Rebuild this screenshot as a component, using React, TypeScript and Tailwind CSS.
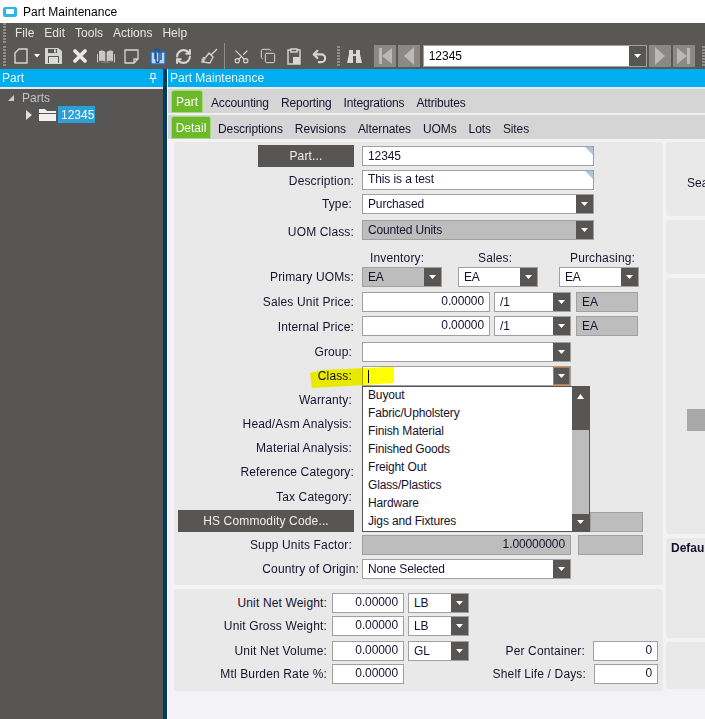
import type { ReactNode } from "react";
import { Copy, RefreshCw, Scissors, Undo2, X } from "lucide-react";

const Arrow = () => (
  <svg width="7" height="5" viewBox="0 0 7 5" className="block">
    <path d="M0 0h7L3.5 4z" fill="#fff" />
  </svg>
);

const Grip = () => (
  <div className="w-[3px] h-[20px] bg-[repeating-linear-gradient(to_bottom,#8e8d8a_0,#8e8d8a_2px,transparent_2px,transparent_3px)]" />
);

function Input({ w, value, right, corner, gray, raise = "" }: { w: string; value?: string; right?: boolean; corner?: boolean; gray?: boolean; raise?: string }) {
  return (
    <div className={`${w} h-[20px] relative border border-[#a0a0a0] flex items-center px-[5px] shrink-0 tracking-[-0.1px] ${gray ? "bg-[#bdbdbd]" : "bg-white"} ${right ? "justify-end" : ""} ${raise}`}>
      <span className="truncate">{value}</span>
      {corner && <div className="absolute top-0 right-0 border-t-[8px] border-l-[8px] border-t-[#b0c4de] border-l-transparent" />}
    </div>
  );
}

function Combo({ w, value, gray, focus }: { w: string; value?: ReactNode; gray?: boolean; focus?: boolean }) {
  return (
    <div className={`${w} h-[20px] border border-[#a0a0a0] flex items-stretch shrink-0 tracking-[-0.15px] ${gray ? "bg-[#bdbdbd]" : "bg-white"}`}>
      <div className="flex-1 min-w-0 px-[5px] flex items-center truncate">{value}</div>
      <div className={`w-[17px] bg-[#575654] flex items-center justify-center ${focus ? "border border-[#c87a2a]" : ""}`}>
        <Arrow />
      </div>
    </div>
  );
}

function Row({ label, mt, pr = "pr-[2px]", children }: { label?: string; mt: string; pr?: string; children?: ReactNode }) {
  return (
    <div className={`flex items-center gap-[8px] relative h-[20px] ${mt}`}>
      <div className="w-[180px] flex justify-end whitespace-nowrap shrink-0">
        <span className={pr}>{label}</span>
      </div>
      {children}
    </div>
  );
}

function BottomRow({ label, mt, children }: { label: string; mt: string; children?: ReactNode }) {
  return (
    <div className={`flex items-center h-[20px] ${mt}`}>
      <div className="w-[153px] text-right whitespace-nowrap shrink-0">{label}</div>
      <div className="w-[5px] shrink-0" />
      {children}
    </div>
  );
}

const classes = ["Buyout", "Fabric/Upholstery", "Finish Material", "Finished Goods", "Freight Out", "Glass/Plastics", "Hardware", "Jigs and Fixtures"];

function NavBtn({ d }: { d: string }) {
  return (
    <div className="w-[22px] h-[22px] bg-[#8a8986] flex items-center justify-center">
      <svg width="22" height="22" viewBox="0 0 22 22"><path d={d} fill="#b9b9b9" /></svg>
    </div>
  );
}

function Toolbar() {
  const ic = "w-[26px] flex justify-center shrink-0";
  return (
    <div className="h-[26px] bg-[#5a5855] flex items-center pl-[3px] text-[#d6d6d6]">
      <Grip />
      <div className="ml-[7px] w-[16px] flex justify-center">
        <svg width="14" height="16" viewBox="0 0 14 16" fill="none" stroke="currentColor" strokeWidth="1.4"><path d="M5 1h8v14H1V5z" /></svg>
      </div>
      <div className="ml-[5px] w-[7px]"><svg width="6" height="4" viewBox="0 0 6 4" className="block"><path d="M0 0h6L3 3.5z" fill="#fff" /></svg></div>
      <div className={ic}>
        <svg width="17" height="16" viewBox="0 0 17 16" fill="#d4d4d4"><path d="M0 0h13l4 3v13H0z" /><path d="M3 1h9v4H3zM3 8h11v7H3z" fill="#5a5855" /><path d="M4 9h9v6H4z" fill="#dcdcdc" /><path d="M9 1.500h2v3H9z" /></svg>
      </div>
      <div className={ic}><X size={20} strokeWidth={4.5} color="#e8e8e8" /></div>
      <div className={ic}>
        <svg width="18" height="15" viewBox="0 0 18 15" fill="#c8c8c8"><path d="M0 3l2-1v10c3-.5 5 0 6.300 1V3C7 1.500 4 1 2 2zM18 3l-2-1v10c-3-.5-5 0-6.300 1V3C11 1.500 14 1 16 2zM0 13.500c3-.8 6-.4 9 .8 3-1.200 6-1.600 9-.8V5h-1v8c-3-.4-6 0-8 1-2-1-5-1.400-8-1V5H0z" /></svg>
      </div>
      <div className={ic}>
        <svg width="15" height="15" viewBox="0 0 15 15" fill="none" stroke="currentColor" strokeWidth="1.3"><path d="M1 1h13v9l-4 4H1zM14 10h-4v4" /></svg>
      </div>
      <div className={ic}>
        <svg width="16" height="17" viewBox="0 0 16 17" fill="none"><rect x="1" y="4" width="14" height="12" fill="#bcd4ec" stroke="#1b6fc2" strokeWidth="1.4" /><path d="M5 11V3a2 2 0 0 1 4 0v10a1.500 1.500 0 0 1-3 0V5M11 4v8" stroke="#14509a" strokeWidth="1.400" /></svg>
      </div>
      <div className={ic}><RefreshCw size={17} strokeWidth={3} /></div>
      <div className={ic}>
        <svg width="17" height="17" viewBox="0 0 17 17" fill="none" stroke="currentColor" strokeWidth="1.3"><path d="M16 1L10 7M8 5l4 4-3 6-8-1 2-1-2-1 3-1-2-1 3-1z" /></svg>
      </div>
      <div className="w-[1px] h-[26px] bg-[#8e8d8a] ml-[1px] mr-[4px]" />
      <div className={ic}><Scissors size={17} strokeWidth={1.6} className="-rotate-90" /></div>
      <div className={ic}><Copy size={16} strokeWidth={1.5} /></div>
      <div className={ic}>
        <svg width="14" height="17" viewBox="0 0 14 17" fill="none" stroke="currentColor" strokeWidth="1.4"><path d="M4 2H1v14h12V2h-3M4 1h6v3H4z" /><path d="M6 9h7v7H6z" fill="#d8d8d8" stroke="none" /></svg>
      </div>
      <div className={ic}><Undo2 size={17} strokeWidth={3} /></div>
      <div className="ml-[4px]"><Grip /></div>
      <div className="ml-[6px] w-[20px]">
        <svg width="17" height="15" viewBox="0 0 17 15" fill="#d8d8d8"><path d="M3 1h4v4h3V1h4v4l2 9h-6V7H7v7H1l2-9z" /></svg>
      </div>
      <div className="ml-[8px] flex gap-[2px]">
        <NavBtn d="M5 3h3v16H5zM18 3v16L8 11z" />
        <NavBtn d="M16 2v18L6 11z" />
      </div>
      <div className="ml-[3px] w-[226px] h-[22px] border border-[#a0a0a0] bg-white flex items-stretch text-black text-[12px]">
        <div className="flex-1 flex items-center px-[5px]">12345</div>
        <div className="w-[17px] bg-[#575654] flex items-center justify-center"><Arrow /></div>
      </div>
      <div className="ml-[2px] flex gap-[2px]">
        <NavBtn d="M6 2v18l10-9z" />
        <NavBtn d="M4 3v16l10-8zM14 3h3v16h-3z" />
      </div>
      <div className="ml-[7px]"><Grip /></div>
    </div>
  );
}

export default function App() {
  return (
    <div className="w-[705px] h-[719px] overflow-hidden bg-white flex flex-col font-['Liberation_Sans',Arial,sans-serif] text-[12px] text-[#16122e]">
      <div className="h-[23px] flex items-center pl-[3px] gap-[6px] text-black">
        <div className="w-[14px] h-[10px] rounded-[2px] bg-[#29b6ea] flex items-center justify-center">
          <div className="w-[8px] h-[5px] bg-white rounded-[1px]" />
        </div>
        <span>Part Maintenance</span>
      </div>

      <div className="h-[20px] bg-[#5a5855] flex items-center pl-[3px] text-[#e6e6e6]">
        <Grip />
        <div className="flex gap-[10px] ml-[9px]">
          <span>File</span>
          <span>Edit</span>
          <span>Tools</span>
          <span>Actions</span>
          <span>Help</span>
        </div>
      </div>
      <Toolbar />

      <div className="flex-1 flex min-h-0">
        <aside className="w-[163px] flex flex-col shrink-0">
          <div className="h-[18px] bg-[#00adef] text-[#f2f2f2] flex items-center justify-between pl-[2px] pr-[6px]">
            <span>Part</span>
            <svg width="8" height="10" viewBox="0 0 8 10" fill="none" stroke="#fff"><path d="M2 .5h4v5H2zM.5 5.500h7M4 6v4" /></svg>
          </div>
          <div className="h-[2px] bg-[#e8e8e8]" />
          <div className="flex-1 bg-[#575654] text-[#bfc4c8] pt-[2px]">
            <div className="flex items-center h-[14px] pl-[8px]">
              <svg width="6" height="6" viewBox="0 0 6 6"><path d="M6 0v6H0z" fill="#cfcfcf" /></svg>
              <span className="ml-[8px]">Parts</span>
            </div>
            <div className="flex items-center h-[17px] pl-[26px] mt-[1px]">
              <svg width="6" height="10" viewBox="0 0 6 10"><path d="M0 0l6 5-6 5z" fill="#dcdcdc" /></svg>
              <svg width="17" height="13" viewBox="0 0 17 13" className="ml-[7px]" fill="#f0f0f0"><path d="M0 1h6l2 2h9v2H0zM0 6h17v7H0z" /></svg>
              <span className="ml-[2px] h-[17px] w-[37px] px-[3px] bg-[#2a9fd8] text-white flex items-center">12345</span>
            </div>
          </div>
        </aside>
        <div className="w-[4px] bg-[#003a5c] shrink-0" />
        <div className="w-[1px] bg-white shrink-0" />

        <main className="flex-1 min-w-0 flex flex-col bg-[#f3f3f5]">
          <div className="h-[18px] bg-[#00adef] text-[#f2f2f2] flex items-center pl-[2px]">Part Maintenance</div>
          <div className="h-[2px] bg-[#e8e8e8]" />
          <div className="h-[24px] bg-[#d5d5d5] flex items-end pl-[3px]">
            <div className="w-[32px] h-[23px] bg-[#6cb92a] border border-[#a9d986] rounded-t-[3px] text-white flex items-center justify-center">Part</div>
            <div className="flex gap-[12px] ml-[8px] h-[23px] pt-[2px] items-center tracking-[-0.15px]">
              <span>Accounting</span>
              <span>Reporting</span>
              <span>Integrations</span>
              <span>Attributes</span>
            </div>
          </div>
          <div className="h-[2px] bg-[#eeeeee]" />
          <div className="h-[24px] bg-[#d5d5d5] flex items-end pl-[3px]">
            <div className="w-[40px] h-[23px] bg-[#6cb92a] border border-[#a9d986] rounded-t-[3px] text-white flex items-center justify-center">Detail</div>
            <div className="flex gap-[12px] ml-[7px] h-[23px] pt-[2px] items-center tracking-[-0.1px]">
              <span>Descriptions</span>
              <span>Revisions</span>
              <span>Alternates</span>
              <span>UOMs</span>
              <span>Lots</span>
              <span>Sites</span>
            </div>
          </div>

          <div className="flex gap-[3px] pl-[6px] pt-[3px]">
            <div className="w-[489px] shrink-0 flex flex-col gap-[4px] tracking-[0.15px]">
              <section className="bg-[#e9e9e9] rounded-[3px] h-[443px] relative">
                <div className="h-[3px]" />
                <div className="flex items-start gap-[8px] h-[22px]">
                  <div className="w-[180px] flex justify-end shrink-0">
                    <div className="w-[96px] h-[22px] bg-[#575654] text-[#f0f0f0] flex items-center justify-center">Part...</div>
                  </div>
                  <div className="mt-[1px]"><Input w="w-[232px]" value="12345" corner /></div>
                </div>
                <Row label="Description:" mt="mt-[3px]" pr="pt-[2px]"><Input w="w-[232px]" value="This is a test" corner raise="pb-[3px]" /></Row>
                <Row label="Type:" mt="mt-[4px]"><Combo w="w-[232px]" value="Purchased" /></Row>
                <Row label="UOM Class:" mt="mt-[6px]" pr="pt-[3px]"><Combo w="w-[232px]" value="Counted Units" gray /></Row>
                <div className="flex h-[14px] mt-[9px] pl-[196px]">
                  <span className="w-[100px]">Inventory:</span>
                  <span className="w-[100px] pl-[8px]">Sales:</span>
                  <span>Purchasing:</span>
                </div>
                <Row label="Primary UOMs:" mt="mt-[4px]" pr="pr-0">
                  <Combo w="w-[80px]" value="EA" gray />
                  <div className="ml-[8px]"><Combo w="w-[80px]" value="EA" /></div>
                  <div className="ml-[13px]"><Combo w="w-[80px]" value="EA" /></div>
                </Row>
                <Row label="Sales Unit Price:" mt="mt-[5px]" pr="pr-0">
                  <Input w="w-[128px]" value="0.00000" right raise="pb-[2px]" />
                  <div className="-ml-[4px]"><Combo w="w-[77px]" value="/1" /></div>
                  <div className="-ml-[3px]"><Input w="w-[62px]" value="EA" gray /></div>
                </Row>
                <Row label="Internal Price:" mt="mt-[4px]" pr="pt-[2px]">
                  <Input w="w-[128px]" value="0.00000" right raise="pb-[2px]" />
                  <div className="-ml-[4px]"><Combo w="w-[77px]" value="/1" /></div>
                  <div className="-ml-[3px]"><Input w="w-[62px]" value="EA" gray /></div>
                </Row>
                <Row label="Group:" mt="mt-[6px]"><Combo w="w-[209px]" /></Row>
                <Row label="Class:" mt="mt-[4px]">
                  <Combo w="w-[209px]" focus value={<span className="block w-[1px] h-[13px] bg-black" />} />
                  <svg width="85" height="22" viewBox="0 0 85 22" className="absolute left-[136px] top-[1px] mix-blend-multiply pointer-events-none">
                    <path d="M0 6L12 3 55 1 84 0V16L55 18 2 21z" fill="#ffff00" />
                  </svg>
                </Row>
                <Row label="Warranty:" mt="mt-[4px]" />
                <Row label="Head/Asm Analysis:" mt="mt-[4px]" />
                <Row label="Material Analysis:" mt="mt-[4px]" />
                <Row label="Reference Category:" mt="mt-[4px]" pr="pr-0" />
                <Row label="Tax Category:" mt="mt-[5px]" />
                <div className="flex items-center gap-[8px] h-[22px] mt-[3px]">
                  <div className="w-[180px] flex justify-end shrink-0">
                    <div className="w-[176px] h-[22px] bg-[#575654] text-[#f0f0f0] flex items-center justify-center">HS Commodity Code...</div>
                  </div>
                  <div className="ml-[228px] mt-[2px]"><Input w="w-[53px]" gray /></div>
                </div>
                <Row label="Supp Units Factor:" mt="mt-[3px]">
                  <Input w="w-[209px]" value="1.00000000" right gray raise="pb-[2px]" />
                  <div className="-ml-[1px]"><Input w="w-[65px]" gray /></div>
                </Row>
                <Row label="Country of Origin:" mt="mt-[4px]" pr="-mr-[5px]"><Combo w="w-[209px]" value="None Selected" /></Row>

                {/* open class dropdown */}
                <div className="absolute left-[188px] top-[244px] w-[228px] h-[146px] bg-white border border-[#555] flex tracking-[-0.15px]">
                  <div className="flex-1 flex flex-col -mt-[1px] pl-[5px]">
                    {classes.map((c) => (
                      <div key={c} className="h-[18px] flex items-center">{c}</div>
                    ))}
                  </div>
                  <div className="w-[17px] bg-[#bdbdbd] flex flex-col justify-between">
                    <div className="h-[43px] bg-[#575654] flex justify-center pt-[7px]">
                      <svg width="7" height="5" viewBox="0 0 7 5" className="block"><path d="M0 5h7L3.500 0z" fill="#fff" /></svg>
                    </div>
                    <div className="h-[17px] bg-[#575654] flex items-center justify-center"><Arrow /></div>
                  </div>
                </div>
              </section>

              <section className="bg-[#e9e9e9] rounded-[3px] h-[102px] pt-[4px] relative">
                <BottomRow label="Unit Net Weight:" mt="mt-0">
                  <Input w="w-[72px]" value="0.00000" right raise="pb-[2px]" />
                  <div className="ml-[4px]"><Combo w="w-[61px]" value="LB" /></div>
                </BottomRow>
                <BottomRow label="Unit Gross Weight:" mt="mt-[3px]">
                  <Input w="w-[72px]" value="0.00000" right raise="pb-[2px]" />
                  <div className="ml-[4px]"><Combo w="w-[61px]" value="LB" /></div>
                </BottomRow>
                <BottomRow label="Unit Net Volume:" mt="mt-[5px]">
                  <Input w="w-[72px]" value="0.00000" right raise="pb-[2px]" />
                  <div className="ml-[4px]"><Combo w="w-[61px]" value="GL" /></div>
                  <span className="ml-[32px] w-[84px] text-right whitespace-nowrap">Per Container:</span>
                  <div className="ml-[8px]"><Input w="w-[65px]" value="0" right raise="pb-[2px]" /></div>
                </BottomRow>
                <BottomRow label="Mtl Burden Rate %:" mt="mt-[3px]">
                  <Input w="w-[72px]" value="0.00000" right raise="pb-[2px]" />
                  <span className="ml-[78px] w-[104px] text-right whitespace-nowrap">Shelf Life / Days:</span>
                  <div className="ml-[8px]"><Input w="w-[64px]" value="0" right raise="pb-[2px]" /></div>
                </BottomRow>
              </section>
            </div>

            <div className="flex-1 min-w-0 flex flex-col gap-[4px] overflow-hidden">
              <div className="h-[74px] bg-[#e9e9e9] rounded-l-[3px] flex items-center pl-[21px] pt-[8px] whitespace-nowrap">Sea</div>
              <div className="h-[54px] bg-[#e9e9e9] rounded-l-[3px]" />
              <div className="h-[256px] bg-[#e9e9e9] rounded-l-[3px] pt-[131px] pl-[21px]">
                <div className="h-[22px] bg-[#a8a8a8]" />
              </div>
              <div className="h-[100px] bg-[#e9e9e9] rounded-l-[3px] pl-[5px] pt-[1px] font-bold whitespace-nowrap">Default</div>
              <div className="h-[47px] bg-[#e9e9e9] rounded-l-[3px]" />
            </div>
          </div>
        </main>
      </div>
    </div>
  );
}
